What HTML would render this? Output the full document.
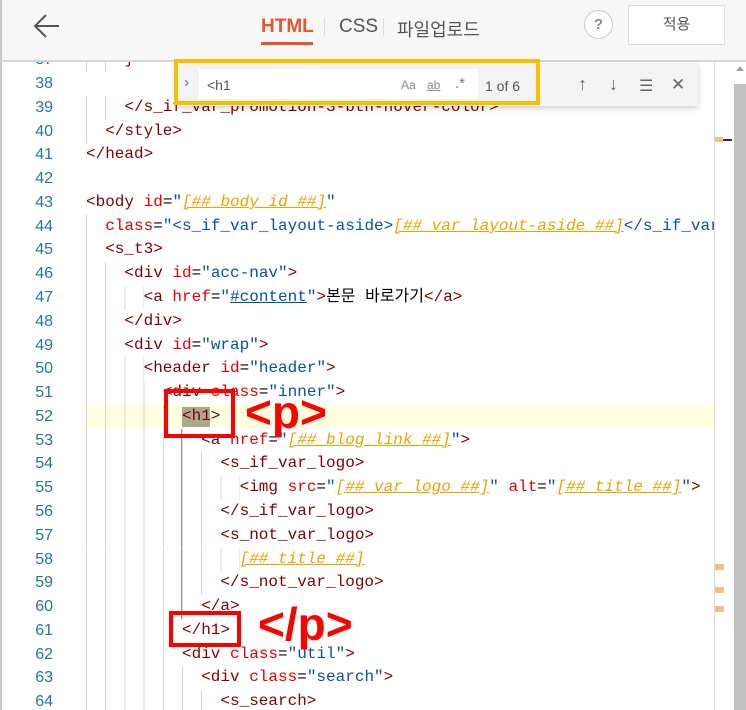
<!DOCTYPE html>
<html><head><meta charset="utf-8"><style>
*{margin:0;padding:0;box-sizing:border-box}
body{width:746px;height:710px;overflow:hidden;background:#fff;font-family:"Liberation Sans","Noto Sans CJK KR",sans-serif;position:relative}
.hdr{position:absolute;left:0;top:0;width:746px;height:62px;background:#f7f7f8;border-bottom:2px solid #d4d6da;border-left:2px solid #c8c8c8;z-index:2}
.tab{position:absolute;top:16px;font-size:19px;color:#555}
.code{position:absolute;left:0;top:62px;width:714px;height:648px;overflow:hidden;border-left:2px solid #c8c8c8}
.ln{position:absolute;left:0;width:714px;height:23.77px;line-height:23.77px;font-family:"Liberation Mono","Noto Sans CJK KR",monospace;font-size:16px;white-space:pre}
.n{position:absolute;left:0;width:51px;text-align:right;color:#237893;font-family:"Liberation Sans",sans-serif;font-size:16px}
.t{position:absolute;left:84px;color:#000}
.i{display:inline-block;height:23.77px;vertical-align:top;background:repeating-linear-gradient(to right,#d6d6d6 0 1px,transparent 1px 19.2px)}
.g{color:#800000}.a{color:#e50000}.v{color:#0451a5}.o{color:#f0a000;font-style:italic;text-decoration:underline}
.ul{text-decoration:underline}
.red{position:absolute;border:4px solid #f00}
.big{position:absolute;color:#f00;font-weight:bold;font-size:46px;font-family:"Liberation Sans",sans-serif;line-height:46px}
</style></head><body>
<div class="hdr">
<svg style="position:absolute;left:30px;top:12px" width="30" height="28" viewBox="0 0 30 28"><path d="M27 14H4M14 3L3 14l11 11" stroke="#555" stroke-width="2" fill="none"/></svg>
<div class="tab" style="left:259px;color:#e8542e;font-weight:bold">HTML</div>
<div style="position:absolute;left:259px;top:42px;width:52px;height:3px;background:#e8542e"></div>
<div style="position:absolute;left:322px;top:18px;width:1px;height:18px;background:#ddd"></div>
<div class="tab" style="left:337px">CSS</div>
<div style="position:absolute;left:381px;top:18px;width:1px;height:18px;background:#ddd"></div>
<div class="tab" style="left:395px;font-size:18px">파일업로드</div>
<div style="position:absolute;left:582px;top:10px;width:29px;height:29px;border:1px solid #ccc;border-radius:50%;background:#fff;color:#888;text-align:center;font-weight:bold;font-size:15px;line-height:27px">?</div>
<div style="position:absolute;left:626px;top:5px;width:97px;height:40px;border:1px solid #ddd;background:#fff;color:#555;text-align:center;font-size:15px;line-height:38px">적용</div>
</div>
<div class="code">
<div style="position:absolute;left:84px;top:343px;width:650px;height:23px;background:#ffffe0"></div>
<div style="position:absolute;left:180px;top:345px;width:28px;height:20px;background:#a9a98c"></div>
<div id="lines"></div>
<div style="position:absolute;left:179px;top:367px;width:1px;height:190px;background:#999"></div>
</div>
<div style="position:absolute;left:714px;top:62px;width:1px;height:648px;background:#ddd"></div>
<div style="position:absolute;left:734px;top:84px;width:12px;height:626px;background:#c1c1c1"></div>
<div style="position:absolute;left:736px;top:66px;width:0;height:0;border:4px solid transparent;border-bottom:5px solid #a0a0a0;border-top:0"></div>
<div style="position:absolute;left:715px;top:139px;width:17px;height:2px;background:#333"></div>
<div style="position:absolute;left:715px;top:137px;width:8px;height:5px;background:#e8c48a"></div>
<div style="position:absolute;left:715px;top:564px;width:9px;height:6px;background:#e8c48a"></div>
<div style="position:absolute;left:715px;top:587px;width:9px;height:6px;background:#e8c48a"></div>
<div style="position:absolute;left:715px;top:606px;width:9px;height:6px;background:#e8c48a"></div>
<!-- find widget -->
<div style="position:absolute;left:178px;top:64px;width:520px;height:42px;background:#f3f3f3;box-shadow:0 2px 6px rgba(0,0,0,.2);z-index:3"></div>
<div style="position:absolute;left:199px;top:69px;width:279px;height:30px;background:#fff;z-index:3"></div>
<div style="position:absolute;z-index:4;left:184px;top:74px;color:#777;font-size:16px">›</div>
<div style="position:absolute;z-index:4;left:207px;top:77px;color:#555;font-size:14px">&lt;h1</div>
<div style="position:absolute;z-index:4;left:401px;top:78px;color:#888;font-size:12px">Aa</div>
<div style="position:absolute;z-index:4;left:427px;top:78px;color:#888;font-size:12px;text-decoration:underline">ab</div>
<div style="position:absolute;z-index:4;left:455px;top:75px;color:#777;font-size:15px">.*</div>
<div style="position:absolute;z-index:4;left:485px;top:78px;color:#555;font-size:14px">1 of 6</div>
<div style="position:absolute;z-index:4;left:578px;top:74px;color:#666;font-size:18px">↑</div>
<div style="position:absolute;z-index:4;left:609px;top:74px;color:#666;font-size:18px">↓</div>
<div style="position:absolute;z-index:4;left:639px;top:76px;color:#666;font-size:16px">☰</div>
<div style="position:absolute;z-index:4;left:671px;top:75px;color:#666;font-size:17px">✕</div>
<div style="position:absolute;z-index:4;left:174px;top:59px;width:366px;height:46px;border:4px solid #f5c000"></div>
<!-- annotations -->
<div class="red" style="left:164px;top:389px;width:71px;height:49px"></div>
<div class="big" style="left:245px;top:389px">&lt;p&gt;</div>
<div class="red" style="left:169px;top:611px;width:72px;height:36px"></div>
<div class="big" style="left:258px;top:601px">&lt;/p&gt;</div>
<script>
const L=[
[37,2,'<span class="g">}</span>'],[38,0,''],
[39,2,'<span class="g">&lt;/s_if_var_promotion-3-btn-hover-color&gt;</span>'],
[40,1,'<span class="g">&lt;/style&gt;</span>'],[41,0,'<span class="g">&lt;/head&gt;</span>'],[42,0,''],
[43,0,'<span class="g">&lt;body</span> <span class="a">id</span>=<span class="v">"<span class="o">[##_body_id_##]</span>"</span>'],
[44,1,'<span class="a">class</span>=<span class="v">"&lt;s_if_var_layout-aside&gt;<span class="o">[##_var_layout-aside_##]</span>&lt;/s_if_var_layout</span>'],
[45,1,'<span class="g">&lt;s_t3&gt;</span>'],
[46,2,'<span class="g">&lt;div</span> <span class="a">id</span>=<span class="v">"acc-nav"</span><span class="g">&gt;</span>'],
[47,3,'<span class="g">&lt;a</span> <span class="a">href</span>=<span class="v">"<span class="ul">#content</span>"</span><span class="g">&gt;</span>본문 바로가기<span class="g">&lt;/a&gt;</span>'],
[48,2,'<span class="g">&lt;/div&gt;</span>'],
[49,2,'<span class="g">&lt;div</span> <span class="a">id</span>=<span class="v">"wrap"</span><span class="g">&gt;</span>'],
[50,3,'<span class="g">&lt;header</span> <span class="a">id</span>=<span class="v">"header"</span><span class="g">&gt;</span>'],
[51,4,'<span class="g">&lt;div</span> <span class="a">class</span>=<span class="v">"inner"</span><span class="g">&gt;</span>'],
[52,5,'<span class="g">&lt;h1&gt;</span>'],
[53,6,'<span class="g">&lt;a</span> <span class="a">href</span>=<span class="v">"<span class="o">[##_blog_link_##]</span>"</span><span class="g">&gt;</span>'],
[54,7,'<span class="g">&lt;s_if_var_logo&gt;</span>'],
[55,8,'<span class="g">&lt;img</span> <span class="a">src</span>=<span class="v">"<span class="o">[##_var_logo_##]</span>"</span> <span class="a">alt</span>=<span class="v">"<span class="o">[##_title_##]</span>"</span><span class="g">&gt;</span>'],
[56,7,'<span class="g">&lt;/s_if_var_logo&gt;</span>'],
[57,7,'<span class="g">&lt;s_not_var_logo&gt;</span>'],
[58,8,'<span class="o">[##_title_##]</span>'],
[59,7,'<span class="g">&lt;/s_not_var_logo&gt;</span>'],
[60,6,'<span class="g">&lt;/a&gt;</span>'],
[61,5,'<span class="g">&lt;/h1&gt;</span>'],
[62,5,'<span class="g">&lt;div</span> <span class="a">class</span>=<span class="v">"util"</span><span class="g">&gt;</span>'],
[63,6,'<span class="g">&lt;div</span> <span class="a">class</span>=<span class="v">"search"</span><span class="g">&gt;</span>'],
[64,7,'<span class="g">&lt;s_search&gt;</span>']];
let h='';
for(const [n,lv,c] of L){
 const top=(10.1+(n-38)*23.77).toFixed(2);
 h+=`<div class="ln" style="top:${top}px"><span class="n">${n}</span><span class="t"><span class="i" style="width:${lv*19.2}px"></span>${c}</span></div>`;
}
document.getElementById('lines').innerHTML=h;
</script>
</body></html>
